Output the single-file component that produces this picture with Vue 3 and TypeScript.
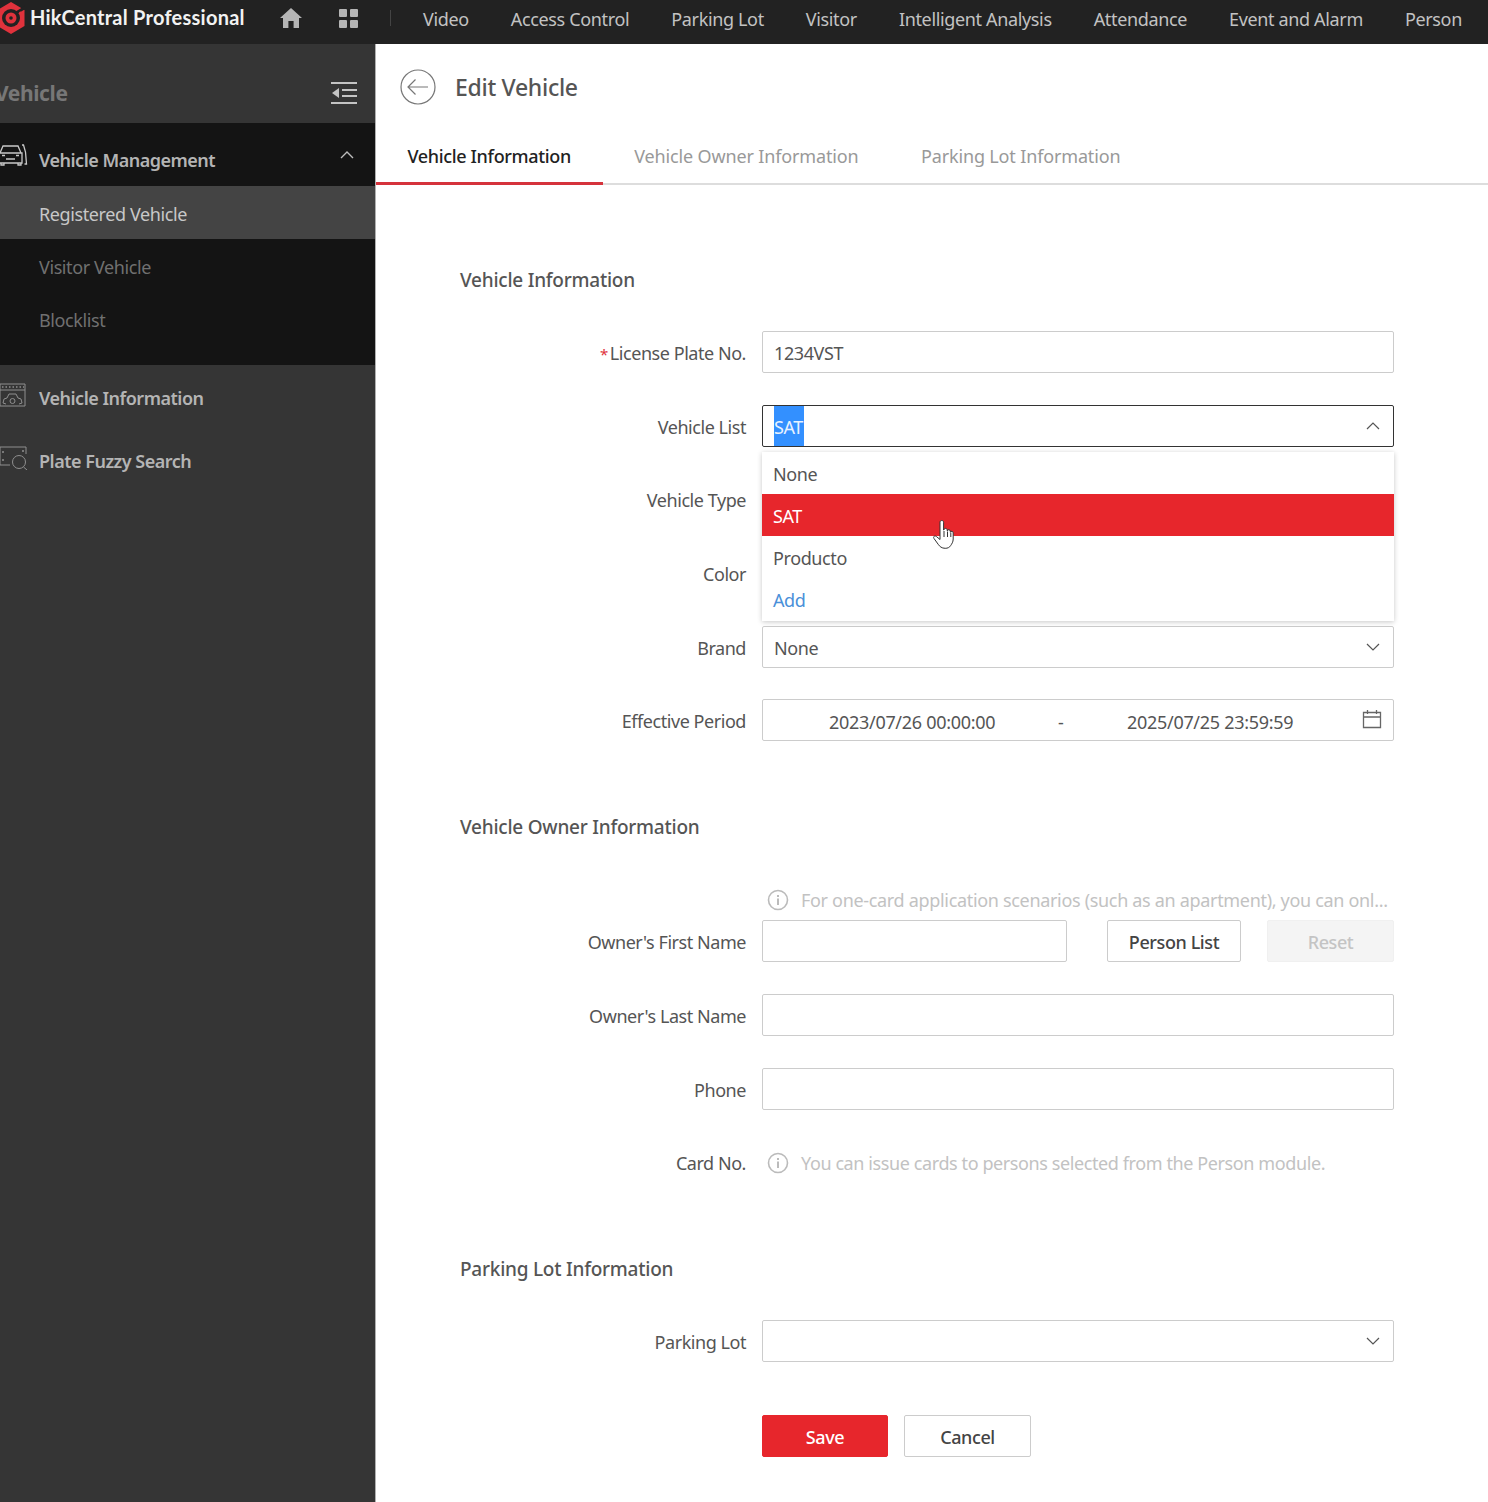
<script setup lang="ts">
import { ref } from 'vue';

const navItems = ['Video', 'Access Control', 'Parking Lot', 'Visitor', 'Intelligent Analysis', 'Attendance', 'Event and Alarm', 'Person'];
const subItems = ['Registered Vehicle', 'Visitor Vehicle', 'Blocklist'];
const tabs = ['Vehicle Information', 'Vehicle Owner Information', 'Parking Lot Information'];
const vehicleOptions = ['None', 'SAT', 'Producto'];

const activeTab = ref(0);
const activeSub = ref(0);
const hoverOption = ref('SAT');
</script>

<template>
  <div class="page">
    <header class="topbar">
      <div class="logo">
        <svg class="logo-mark" viewBox="0 0 28 32" width="28" height="32">
          <path d="M14 0 27.500 8v16L14 32 .5 24V8Z" fill="#e0323c" />
          <circle cx="14" cy="16" r="9" fill="#222" />
          <circle cx="14" cy="16" r="5.500" fill="#e0323c" />
          <circle cx="14" cy="16" r="1.800" fill="#222" />
          <path d="M19 11 29 5" stroke="#222" stroke-width="3" />
          <circle cx="23.500" cy="11" r="1.500" fill="#e0323c" />
        </svg>
        <span class="logo-text">HikCentral Professional</span>
      </div>
      <svg class="home" viewBox="0 0 22 20" width="22" height="20">
        <path d="M11 0 22 10h-3v10h-5.400v-7H8.400v7H3V10H0Z" fill="#b5b5b5" />
      </svg>
      <div class="apps"><i /><i /><i /><i /></div>
      <span class="divider" />
      <nav class="nav">
        <a v-for="item in navItems" :key="item">{{ item }}</a>
      </nav>
    </header>

    <div class="body">
      <aside class="sidebar">
        <div class="side-title">
          <span>Vehicle</span>
          <svg viewBox="0 0 26 22" width="26" height="22">
            <path d="M0 1h26M11 8h15M11 14h15M0 21h26" stroke="#c4c4c4" stroke-width="2" />
            <path d="M1 11l7-5v10Z" fill="#c4c4c4" />
          </svg>
        </div>

        <div class="side-group">
          <div class="side-head">
            <svg class="side-icon" viewBox="0 0 30 24" width="30" height="24">
              <path d="M2 9 5 2h15l3 7M1 9h23v10H1ZM4 11.500h3M18 11.500h3M8 15h9" fill="none" stroke="#c8c8c8" stroke-width="1.300" />
              <path d="M24 1h1.500l2 7 1 12h-2M3 19v2h3v-2M20 19v2h3v-2" fill="none" stroke="#c8c8c8" stroke-width="1.300" />
            </svg>
            <span class="head-label">Vehicle Management</span>
            <svg class="chev-up" viewBox="0 0 14 8" width="14" height="8">
              <path d="M1 7l6-6 6 6" fill="none" stroke="#bdbdbd" stroke-width="1.400" />
            </svg>
          </div>
          <a
            v-for="(item, i) in subItems"
            :key="item"
            class="side-sub"
            :class="{ active: i === activeSub }"
          >{{ item }}</a>
        </div>

        <div class="side-item">
          <svg class="side-icon" viewBox="0 0 30 24" width="30" height="24">
            <path d="M2 1h25v22H2ZM2 7h25" fill="none" stroke="#8f8f8f" stroke-width="1" />
            <path d="M4 4h22" stroke="#8f8f8f" stroke-width="1.500" stroke-dasharray="1.500 2" />
            <path d="M8 21l-3-1 1-4 3-1 2-4h7l2 4 3 1 1 4-3 1" fill="none" stroke="#8f8f8f" stroke-width="1" />
            <circle cx="14.500" cy="18" r="2.500" fill="none" stroke="#8f8f8f" stroke-width="1" />
          </svg>
          <span>Vehicle Information</span>
        </div>
        <div class="side-item">
          <svg class="side-icon" viewBox="0 0 30 24" width="30" height="24">
            <path d="M28 8V1H2v18h10" fill="none" stroke="#8f8f8f" stroke-width="1" />
            <path d="M4 6h2M24 5h2M4 14h2" stroke="#8f8f8f" stroke-width="1.500" />
            <circle cx="21" cy="16" r="6.500" fill="none" stroke="#8f8f8f" stroke-width="1" />
            <path d="M25.500 21 29 24" stroke="#8f8f8f" stroke-width="1" />
          </svg>
          <span>Plate Fuzzy Search</span>
        </div>
      </aside>

      <main class="main">
        <div class="page-head">
          <svg viewBox="0 0 36 36" width="36" height="36">
            <circle cx="18" cy="18" r="17" fill="none" stroke="#777" stroke-width="1.200" />
            <path d="M28 18H8M15.500 10.500 8 18l7.500 7.500" fill="none" stroke="#777" stroke-width="1.200" />
          </svg>
          <h1>Edit Vehicle</h1>
        </div>

        <div class="tabs">
          <a
            v-for="(tab, i) in tabs"
            :key="tab"
            class="tab"
            :class="{ active: i === activeTab }"
          >{{ tab }}</a>
        </div>

        <div class="form">
          <h2 class="section first">Vehicle Information</h2>

          <div class="row">
            <label><em>*</em>License Plate No.</label>
            <div class="field">1234VST</div>
          </div>

          <div class="row">
            <label>Vehicle List</label>
            <div class="select-wrap">
              <div class="field focused">
                <span class="selected-text">SAT</span>
                <svg class="chev" viewBox="0 0 14 8" width="14" height="8">
                  <path d="M1 7l6-6 6 6" fill="none" stroke="#555" stroke-width="1.200" />
                </svg>
              </div>
              <ul class="dropdown">
                <li
                  v-for="opt in vehicleOptions"
                  :key="opt"
                  :class="{ hover: opt === hoverOption }"
                >{{ opt }}</li>
                <li class="add">Add</li>
                <svg class="cursor" viewBox="0 0 22 30" width="22" height="30">
                  <path
                    d="M7 2.200c0-2.200 3.600-2.200 3.600 0V10l.4-.1c0-2 3-2 3.200 0l.1 1c.3-1.800 3-1.600 3 .3l.1 1c.4-1.400 2.800-1.200 2.800.6V19c0 3-1.500 5-2.500 6.500-1.200 2-3 2.800-5.500 2.800-3.500 0-5.500-1.800-7-4L1 18.500c-1.200-1.800.8-3.300 2.400-2L7 19.500Z"
                    fill="#fff"
                    stroke="#333"
                    stroke-width="1"
                  />
                  <path d="M11 11v6M14.500 11.500v5.500M17.800 12.500v4.500" fill="none" stroke="#333" stroke-width="1" />
                </svg>
              </ul>
            </div>
          </div>

          <div class="row">
            <label>Vehicle Type</label>
            <div class="field" />
          </div>
          <div class="row">
            <label>Color</label>
            <div class="field" />
          </div>

          <div class="row">
            <label>Brand</label>
            <div class="field">
              None
              <svg class="chev" viewBox="0 0 14 8" width="14" height="8">
                <path d="M1 1l6 6 6-6" fill="none" stroke="#555" stroke-width="1.200" />
              </svg>
            </div>
          </div>

          <div class="row">
            <label>Effective Period</label>
            <div class="field period">
              <span class="date-a">2023/07/26 00:00:00</span>
              <span class="dash">-</span>
              <span class="date-b">2025/07/25 23:59:59</span>
              <svg class="cal" viewBox="0 0 20 20" width="20" height="20">
                <path d="M1.500 3.500h17v15h-17ZM1.500 8h17M5.500 1v4M14.500 1v4" fill="none" stroke="#666" stroke-width="1.300" />
              </svg>
            </div>
          </div>

          <h2 class="section owner">Vehicle Owner Information</h2>

          <div class="hint-row">
            <svg class="info" viewBox="0 0 22 22" width="22" height="22">
              <circle cx="11" cy="11" r="9.500" fill="none" stroke="#bbb" stroke-width="1.600" />
              <path d="M11 9.500v6.500M11 6v2" stroke="#bbb" stroke-width="2" />
            </svg>
            <span>For one-card application scenarios (such as an apartment), you can onl...</span>
          </div>

          <div class="row">
            <label>Owner's First Name</label>
            <div class="name-line">
              <div class="field name-input" />
              <button class="btn person">Person List</button>
              <button class="btn reset">Reset</button>
            </div>
          </div>
          <div class="row">
            <label>Owner's Last Name</label>
            <div class="field" />
          </div>
          <div class="row">
            <label>Phone</label>
            <div class="field" />
          </div>
          <div class="row card">
            <label>Card No.</label>
            <div class="hint-inline">
              <svg class="info" viewBox="0 0 22 22" width="22" height="22">
                <circle cx="11" cy="11" r="9.500" fill="none" stroke="#bbb" stroke-width="1.600" />
                <path d="M11 9.500v6.500M11 6v2" stroke="#bbb" stroke-width="2" />
              </svg>
              <span>You can issue cards to persons selected from the Person module.</span>
            </div>
          </div>

          <h2 class="section parking">Parking Lot Information</h2>

          <div class="row">
            <label>Parking Lot</label>
            <div class="field">
              <svg class="chev" viewBox="0 0 14 8" width="14" height="8">
                <path d="M1 1l6 6 6-6" fill="none" stroke="#555" stroke-width="1.200" />
              </svg>
            </div>
          </div>

          <div class="actions">
            <button class="btn save">Save</button>
            <button class="btn cancel">Cancel</button>
          </div>
        </div>
      </main>
    </div>
  </div>
</template>

<style>
html,
body {
  margin: 0;
  background: #fff;
  overflow: hidden;
}
</style>

<style scoped>
.page {
  width: 1488px;
  height: 1502px;
  overflow: hidden;
  display: flex;
  flex-direction: column;
  font-family: 'Noto Sans', 'Open Sans', sans-serif;
  font-size: 18px;
  letter-spacing: -0.4px;
  color: #555;
}

.topbar {
  height: 44px;
  background: #222;
  display: flex;
  align-items: center;
  flex: none;
}

.logo {
  display: flex;
  align-items: center;
  width: 283px;
  margin-left: -3px;
  margin-top: -10px;
  flex: none;
}

.logo-mark {
  flex: none;
  margin-top: 2px;
}

.logo-text {
  margin-left: 5px;
  color: #f2f2f2;
  font-family: 'Lato', sans-serif;
  font-weight: 700;
  font-size: 20px;
  letter-spacing: 0.25px;
  white-space: nowrap;
}

.home {
  margin-top: -8px;
  flex: none;
}

.apps {
  display: grid;
  grid-template-columns: 8px 8px;
  gap: 3px;
  margin-left: 37px;
  margin-top: -8px;
}

.apps i {
  width: 8px;
  height: 8px;
  background: #b5b5b5;
  border-radius: 1px;
}

.divider {
  width: 1px;
  height: 16px;
  background: #444;
  margin-left: 32px;
  margin-top: -8px;
}

.nav {
  display: flex;
  gap: 42px;
  margin-left: 32px;
  margin-top: -6px;
  color: #c2c2c2;
  letter-spacing: -0.35px;
  white-space: nowrap;
}

.body {
  display: flex;
  flex: 1;
  min-height: 0;
}

.sidebar {
  width: 375px;
  flex: none;
  background: #353535;
  border-right: 1px solid #b0b0b0;
}

.side-title {
  height: 79px;
  box-sizing: border-box;
  padding-top: 18px;
  display: flex;
  align-items: center;
  justify-content: space-between;
  margin-left: -5px;
  padding-right: 18px;
  color: #777;
  font-size: 21px;
  font-weight: 700;
}

.side-group {
  background: #141414;
  padding-bottom: 20px;
  margin-bottom: 1px;
}

.side-head {
  height: 63px;
  display: flex;
  align-items: center;
  color: #b4b4b4;
  font-weight: 600;
  letter-spacing: -0.5px;
}

.head-label {
  padding-top: 10px;
}

.side-head .side-icon {
  margin-top: 2px;
}

.side-icon {
  flex: none;
  margin-left: -2px;
  margin-right: 11px;
  margin-top: -6px;
}

.chev-up {
  margin-left: auto;
  margin-right: 21px;
}

.side-sub {
  display: flex;
  align-items: center;
  height: 53px;
  box-sizing: border-box;
  padding-left: 39px;
  padding-top: 2px;
  color: #707070;
}

.side-sub.active {
  background: #444;
  color: #c8c8c8;
}

.side-item {
  height: 63px;
  display: flex;
  align-items: center;
  color: #b4b4b4;
  font-weight: 600;
  letter-spacing: -0.5px;
}

.main {
  flex: 1;
  min-width: 0;
  background: #fff;
}

.page-head {
  height: 86px;
  display: flex;
  align-items: center;
  padding-left: 24px;
  gap: 19px;
}

.page-head h1 {
  margin: 0;
  font-size: 23px;
  font-weight: 500;
  color: #555;
  letter-spacing: -0.3px;
}

.tabs {
  display: flex;
  height: 55px;
  border-bottom: 2px solid #ddd;
  box-sizing: border-box;
}

.tab {
  padding: 0 31px 0 31.500px;
  line-height: 52px;
  color: #999;
  letter-spacing: -0.15px;
  white-space: nowrap;
}

.tab.active {
  color: #222;
  font-weight: 500;
  letter-spacing: -0.35px;
  padding-right: 32px;
  border-bottom: 3px solid #d5333c;
  height: 52px;
}

.form {
  padding-left: 84px;
  width: 934px;
}

.section {
  margin: 0;
  font-size: 19px;
  font-weight: 500;
  color: #555;
  letter-spacing: -0.24px;
  line-height: 28px;
}

.section.first {
  padding-top: 81px;
  padding-bottom: 37px;
}

.section.owner {
  padding-top: 40px;
}

.section.parking {
  padding-top: 72px;
  padding-bottom: 37px;
}

.row {
  display: flex;
  align-items: center;
  height: 42px;
  margin-bottom: 31.700px;
}

.row label {
  width: 286px;
  flex: none;
  margin-right: 16px;
  padding-top: 2px;
  text-align: right;
  color: #555;
  letter-spacing: -0.45px;
  white-space: nowrap;
}

.row label em {
  color: #e0323c;
  font-size: 15px;
  font-style: normal;
  margin-right: 2px;
}

.field {
  flex: 1;
  height: 42px;
  box-sizing: border-box;
  border: 1px solid #ccc;
  border-radius: 2px;
  padding: 2px 11px 0;
  display: flex;
  align-items: center;
  position: relative;
  color: #555;
  background: #fff;
}

.field.focused {
  border-color: #333;
  padding-top: 0;
}

.selected-text {
  background: #3390ff;
  color: #e8f2ff;
  line-height: 42px;
  display: inline-block;
  height: 40px;
  width: 30px;
  overflow: hidden;
}

.chev {
  position: absolute;
  right: 13px;
  top: 16px;
}

.select-wrap {
  flex: 1;
  position: relative;
  height: 42px;
}

.dropdown {
  position: absolute;
  z-index: 5;
  top: 47px;
  left: 0;
  right: 0;
  margin: 0;
  padding: 0;
  list-style: none;
  background: #fff;
  height: 169px;
  box-shadow: 0 1px 5px rgba(0, 0, 0, 0.22);
  display: flex;
  flex-direction: column;
  box-sizing: border-box;
}

.dropdown li {
  height: 42px;
  line-height: 44px;
  padding-left: 11px;
  color: #555;
}

.dropdown li.hover {
  background: #e7262c;
  color: #fff;
}

.dropdown li.add {
  color: #4a90d9;
}

.cursor {
  position: absolute;
  left: 171px;
  top: 68px;
}

.period {
  padding: 3px 0 0;
  letter-spacing: -0.3px;
}

.date-a {
  position: absolute;
  left: 66px;
}

.dash {
  position: absolute;
  left: 295px;
}

.date-b {
  position: absolute;
  left: 364px;
}

.cal {
  position: absolute;
  right: 11px;
  top: 9px;
}

.hint-row {
  height: 32px;
  margin-top: 43px;
  margin-bottom: 4px;
  margin-left: 307px;
  display: flex;
  align-items: center;
  color: #c2c2c2;
  letter-spacing: -0.32px;
  white-space: nowrap;
}

.hint-row .info,
.hint-inline .info {
  margin-right: 12px;
  flex: none;
}

.name-line {
  flex: 1;
  display: flex;
  align-items: center;
}

.name-input {
  flex: none;
  width: 305px;
}

.btn {
  height: 42px;
  box-sizing: border-box;
  font: inherit;
  letter-spacing: inherit;
  border-radius: 2px;
  border: 1px solid #ccc;
  background: #fff;
  color: #444;
  font-weight: 500;
  padding: 2px 0 0;
}

.person {
  width: 134px;
  margin-left: 40px;
}

.reset {
  width: 127px;
  margin-left: 26px;
  background: #f4f4f4;
  border-color: #f0f0f0;
  color: #c4c4c4;
}

.row.card {
  margin-bottom: 0;
}

.hint-inline {
  display: flex;
  align-items: center;
  margin-left: 5px;
  margin-top: 2px;
  color: #c2c2c2;
  white-space: nowrap;
}

.actions {
  display: flex;
  gap: 16px;
  margin-left: 302px;
  margin-top: 53px;
}

.save {
  width: 126px;
  background: #e7262c;
  border-color: #e7262c;
  color: #fff;
}

.cancel {
  width: 127px;
}
</style>
